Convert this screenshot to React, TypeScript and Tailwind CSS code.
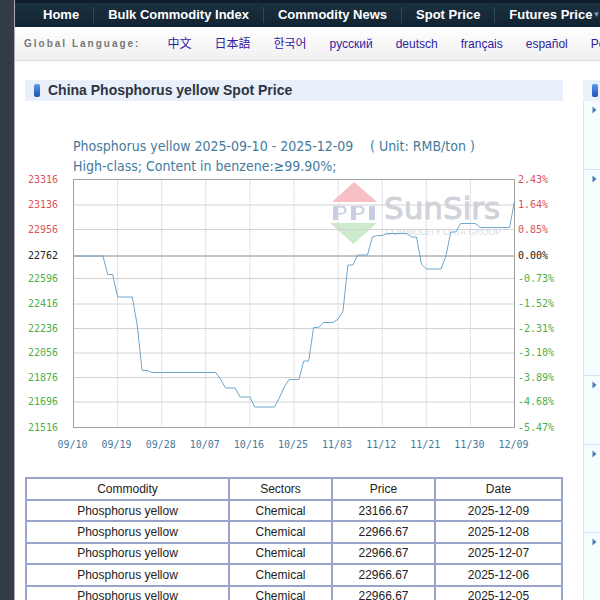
import React from 'react';

interface PriceRow {
  date: string;
  price: string;
}

interface Tick {
  y: number;
  price: string;
  percent: string;
  color: string;
}

const navItems = ['Home', 'Bulk Commodity Index', 'Commodity News', 'Spot Price', 'Futures Price'];

const languages = ['中文', '日本語', '한국어', 'русский', 'deutsch', 'français', 'español', 'Português'];

const rows: PriceRow[] = [
  { date: '2025-12-09', price: '23166.67' },
  { date: '2025-12-08', price: '22966.67' },
  { date: '2025-12-07', price: '22966.67' },
  { date: '2025-12-06', price: '22966.67' },
  { date: '2025-12-05', price: '22966.67' },
];

const RED = '#d9535a';
const BLACK = '#222222';
const GREEN = '#4bae4b';

const ticks: Tick[] = [
  { y: 49.5, price: '23316', percent: '2.43%', color: RED },
  { y: 75, price: '23136', percent: '1.64%', color: RED },
  { y: 99.5, price: '22956', percent: '0.85%', color: RED },
  { y: 126, price: '22762', percent: '0.00%', color: BLACK },
  { y: 148.5, price: '22596', percent: '-0.73%', color: GREEN },
  { y: 174, price: '22416', percent: '-1.52%', color: GREEN },
  { y: 198.5, price: '22236', percent: '-2.31%', color: GREEN },
  { y: 223, price: '22056', percent: '-3.10%', color: GREEN },
  { y: 247.5, price: '21876', percent: '-3.89%', color: GREEN },
  { y: 272, price: '21696', percent: '-4.68%', color: GREEN },
  { y: 297.5, price: '21516', percent: '-5.47%', color: GREEN },
];

const dates = ['09/10', '09/19', '09/28', '10/07', '10/16', '10/25', '11/03', '11/12', '11/21', '11/30', '12/09'];

// [days since 09/10, height in the chart]
const line: [number, number][] = [
  [0, 126], [6, 126], [7, 144.5], [8, 144.5], [9, 167], [12, 167], [13, 195], [14, 240.5], [15, 240.5],
  [16, 242.5], [29, 242.5], [30, 249], [31, 258], [33, 258], [34, 267], [36, 267], [37, 277], [41, 277],
  [42, 268], [43, 257], [44, 249.5], [46, 249.5], [47, 231], [48, 231], [49, 197.5], [50, 197.5],
  [51, 192.5], [53, 192.5], [54, 189], [55, 181], [56, 135], [57, 135], [58, 125], [60, 125], [61, 107],
  [62, 105.5], [63, 105.5], [64, 103.5], [68, 103.5], [69, 107], [70, 107], [71, 134], [72, 139],
  [75, 139], [76, 126], [77, 102], [78, 102], [79, 93.5], [82, 93.5], [83, 97.5], [89, 97.5], [90, 71],
];

const LEFT = 48.5;
const RIGHT = 489.5;
const DAY = (RIGHT - LEFT) / 90;

const Watermark = () => (
  <g>
    <path d="M329 52 L352 72 H307 Z" fill="#f9bfc6" />
    <path d="M305 93 H352 L328.500 114 Z" fill="#cdeacd" />
    <g fill="#c9cde4">
      <rect x="308" y="76" width="5" height="14" />
      <rect x="326" y="76" width="5" height="14" />
      <rect x="344" y="76" width="6" height="14" />
      <text x="309" y="90" fontSize="20" className="font-['Liberation_Sans']">P</text>
      <text x="327" y="90" fontSize="20" className="font-['Liberation_Sans']">P</text>
    </g>
    <text x="359" y="89" fontSize="31" fill="#d0d3da" stroke="#d0d3da" strokeWidth="1" className="font-['DejaVu_Sans']">
      SunSirs
    </text>
    <text x="360" y="105" fontSize="9" fill="#d9dce3" className="font-['Liberation_Sans']">COMMODITY DATA GROUP</text>
  </g>
);

const PriceChart = () => (
  <svg viewBox="0 0 538 330" className="block w-full" role="img" aria-label="Phosphorus yellow price chart">
    <g fontSize="14" fill="#457b9d" className="font-['DejaVu_Sans_Condensed','DejaVu_Sans',sans-serif]">
      <text x="48" y="21">Phosphorus yellow 2025-09-10 - 2025-12-09</text>
      <text x="345" y="21">( Unit: RMB/ton )</text>
      <text x="48" y="41">High-class; Content in benzene:≥99.90%;</text>
    </g>

    <Watermark />

    {/* Grid */}
    <g stroke="#d2d2d2">
      {ticks.map((tick) => (
        <line key={tick.price} x1={LEFT} x2={RIGHT} y1={tick.y} y2={tick.y} />
      ))}
      {dates.map((date, i) => (
        <line key={date} x1={LEFT + i * 9 * DAY} x2={LEFT + i * 9 * DAY} y1="49.5" y2="297.5" strokeDasharray="2 1" />
      ))}
    </g>
    <rect x={LEFT} y="49.5" width={RIGHT - LEFT} height="248" fill="none" stroke="#a0a0a0" />
    <line x1={LEFT} x2={RIGHT} y1="126" y2="126" stroke="#a0a0a0" />

    <polyline
      points={line.map(([day, y]) => `${LEFT + day * DAY},${y}`).join(' ')}
      fill="none"
      stroke="#6fa6cc"
      strokeWidth="1"
    />

    {/* Axis labels */}
    <g fontSize="10" className="font-['DejaVu_Sans_Mono',monospace]">
      {ticks.map((tick) => (
        <g key={tick.price} fill={tick.color}>
          <text x="3" y={tick.y + 3}>{tick.price}</text>
          <text x="493" y={tick.y + 3}>{tick.percent}</text>
        </g>
      ))}
      {dates.map((date, i) => (
        <text key={date} x={LEFT + i * 9 * DAY - 1} y="318" textAnchor="middle" fill="#457b9d">{date}</text>
      ))}
    </g>
  </svg>
);

const Bullet = () => (
  <span className="h-[13px] w-[6px] shrink-0 rounded-[2px] bg-gradient-to-b from-[#5b9be8] to-[#1c50b8]" />
);

const SideItem = ({ className }: { className: string }) => (
  <li className={`border-b border-[#dbe1f2] pt-[5px] pl-[8px] ${className}`}>
    <svg viewBox="0 0 5 8" className="h-2 w-[5px]">
      <path d="M0.500 0.500 L4.500 4 L0.500 7.500 Z" fill="#4a7ab0" />
    </svg>
  </li>
);

export default function App() {
  return (
    <div className="flex h-screen overflow-hidden bg-white font-['Liberation_Sans','Noto_Sans_CJK_SC',sans-serif] text-[#222]">
      <div className="w-[15px] shrink-0 border-r border-[#a9a9b0] bg-gradient-to-r from-[#333b46] from-60% to-[#3d3a44]" />

      <div className="min-w-0 flex-1">
        <nav className="flex h-[27px] items-center overflow-hidden border-t-3 border-[#0f1d2c] bg-gradient-to-b from-[#1b3040] to-[#132432] pl-[14px]">
          {navItems.map((item) => (
            <a
              key={item}
              href="#"
              className="shrink-0 border-r border-[#34495a] px-[14px] text-[13px] leading-4 font-bold whitespace-nowrap text-white last:flex last:items-center last:border-r-0 last:pr-0"
            >
              {item}
              {item === 'Futures Price' && <span className="text-[8px] text-[#6fa3c4]">▼</span>}
            </a>
          ))}
        </nav>

        <div className="flex h-[34px] items-center overflow-hidden border-b border-[#dcdcdc] bg-gradient-to-b from-white to-[#f0f0f0] pl-[9px] whitespace-nowrap">
          <span className="mr-[27px] text-[10px] font-bold tracking-[2px] text-[#777]">Global Language:</span>
          <div className="flex gap-[23px] text-[12px]">
            {languages.map((language) => (
              <a key={language} href="#" className="shrink-0 text-[#2f22a0]">{language}</a>
            ))}
          </div>
        </div>

        <div className="flex gap-5 pt-[19px] pl-[10px]">
          <main className="min-w-0 flex-1">
            <h1 className="flex h-[21px] items-center gap-2 bg-[#e9effb] pl-[9px] text-[14px] font-bold text-[#2d3440]">
              <Bullet />
              China Phosphorus yellow Spot Price
            </h1>

            <div className="pt-[29px]">
              <PriceChart />
            </div>

            <table className="mt-[17px] h-[131px] w-full table-fixed border-collapse text-center text-[12px] leading-4">
              <colgroup>
                <col />
                <col className="w-[103px]" />
                <col className="w-[103px]" />
                <col className="w-[127px]" />
              </colgroup>
              <thead>
                <tr className="h-[22px]">
                  {['Commodity', 'Sectors', 'Price', 'Date'].map((head) => (
                    <th key={head} className="border-2 border-[#99a3cc] font-normal">{head}</th>
                  ))}
                </tr>
              </thead>
              <tbody>
                {rows.map((row) => (
                  <tr key={row.date}>
                    <td className="border-2 border-[#99a3cc]">Phosphorus yellow</td>
                    <td className="border-2 border-[#99a3cc]">Chemical</td>
                    <td className="border-2 border-[#99a3cc]">{row.price}</td>
                    <td className="border-2 border-[#99a3cc]">{row.date}</td>
                  </tr>
                ))}
              </tbody>
            </table>
          </main>

          <aside className="w-[17px] shrink-0 overflow-hidden">
            <div className="flex h-[21px] items-center bg-[#e9f2fb] pl-[9px]">
              <Bullet />
            </div>
            <ul className="border-l border-[#dbe1f2] bg-[#f7fcff] leading-none">
              <SideItem className="h-[69px]" />
              <SideItem className="h-[206px]" />
              <SideItem className="h-[69px]" />
              <SideItem className="h-[88px]" />
              <SideItem className="h-[88px]" />
            </ul>
          </aside>
        </div>
      </div>
    </div>
  );
}
